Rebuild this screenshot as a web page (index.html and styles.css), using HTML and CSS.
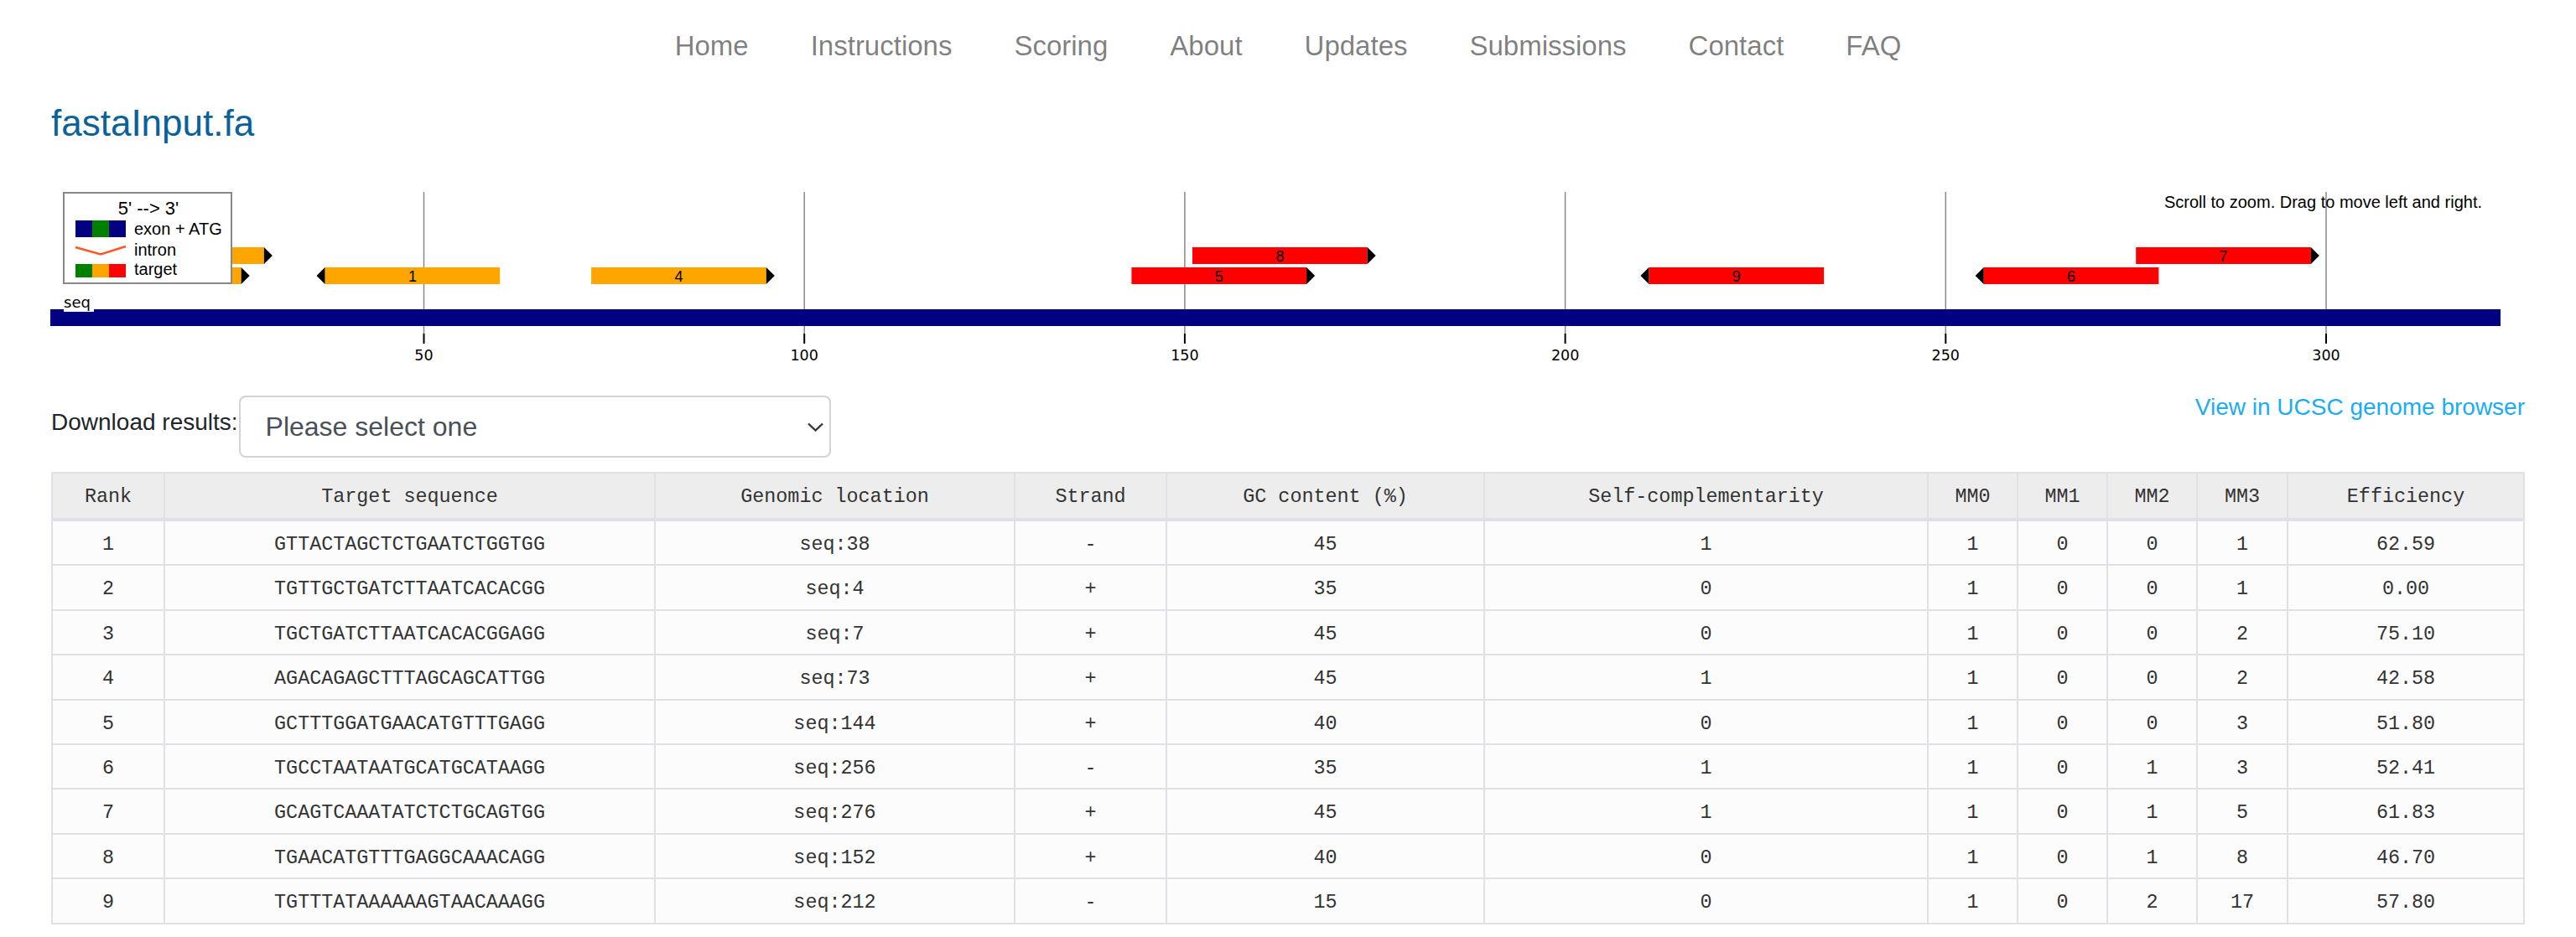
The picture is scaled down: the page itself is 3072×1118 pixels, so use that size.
FILE: index.html
```html
<!DOCTYPE html>
<html lang="en">
<head>
<meta charset="utf-8">
<title>fastaInput.fa</title>
<link rel="stylesheet" href="styles.css">
</head>
<body>
<nav class="topnav">
  <a href="#">Home</a>
  <a href="#">Instructions</a>
  <a href="#">Scoring</a>
  <a href="#">About</a>
  <a href="#">Updates</a>
  <a href="#">Submissions</a>
  <a href="#">Contact</a>
  <a href="#">FAQ</a>
</nav>
<main class="page">
  <h1 class="title">fastaInput.fa</h1>

  <svg class="diagram" width="2950" height="220" viewBox="0 0 2950 220">
    <g transform="translate(-61,-220)">
      <g class="grid">
        <line x1="505.5" y1="229" x2="505.5" y2="398"/>
        <line x1="959.2" y1="229" x2="959.2" y2="398"/>
        <line x1="1412.9" y1="229" x2="1412.9" y2="398"/>
        <line x1="1866.6" y1="229" x2="1866.6" y2="398"/>
        <line x1="2320.3" y1="229" x2="2320.3" y2="398"/>
        <line x1="2774" y1="229" x2="2774" y2="398"/>
      </g>
      <g class="ticks">
        <line x1="505.5" y1="398" x2="505.5" y2="410"/>
        <line x1="959.2" y1="398" x2="959.2" y2="410"/>
        <line x1="1412.9" y1="398" x2="1412.9" y2="410"/>
        <line x1="1866.6" y1="398" x2="1866.6" y2="410"/>
        <line x1="2320.3" y1="398" x2="2320.3" y2="410"/>
        <line x1="2774" y1="398" x2="2774" y2="410"/>
      </g>
      <g class="ticklabels">
        <text x="505.5" y="430">50</text>
        <text x="959.2" y="430">100</text>
        <text x="1412.9" y="430">150</text>
        <text x="1866.6" y="430">200</text>
        <text x="2320.3" y="430">250</text>
        <text x="2774" y="430">300</text>
      </g>

      <rect x="60" y="369" width="2922" height="20" fill="#000080"/>
      <rect x="76" y="356" width="36" height="16" fill="#fff"/>
      <text class="seqlabel" x="76" y="367">seq</text>

      <g class="targets">
        <!-- rank 2, seq:4 + (label hidden under legend) -->
        <rect x="79" y="319" width="208.7" height="20" fill="#ffa500"/>
        <polygon points="287.7,319 297.7,329 287.7,339"/>
        <!-- rank 3, seq:7 + (label hidden under legend) -->
        <rect x="106.2" y="295" width="208.7" height="20" fill="#ffa500"/>
        <polygon points="314.9,295 324.9,305 314.9,315"/>
        <!-- rank 1, seq:38 - -->
        <rect x="387.5" y="319" width="208.7" height="20" fill="#ffa500"/>
        <polygon points="387.5,319 377.5,329 387.5,339"/>
        <text x="491.9" y="335.5">1</text>
        <!-- rank 4, seq:73 + -->
        <rect x="705.1" y="319" width="208.7" height="20" fill="#ffa500"/>
        <polygon points="913.8,319 923.8,329 913.8,339"/>
        <text x="809.5" y="335.5">4</text>
        <!-- rank 5, seq:144 + -->
        <rect x="1349.4" y="319" width="208.7" height="20" fill="#ff0000"/>
        <polygon points="1558.1,319 1568.1,329 1558.1,339"/>
        <text x="1453.8" y="335.5">5</text>
        <!-- rank 8, seq:152 + -->
        <rect x="1422" y="295" width="208.7" height="20" fill="#ff0000"/>
        <polygon points="1630.7,295 1640.7,305 1630.7,315"/>
        <text x="1526.4" y="311.5">8</text>
        <!-- rank 9, seq:212 - -->
        <rect x="1966.4" y="319" width="208.7" height="20" fill="#ff0000"/>
        <polygon points="1966.4,319 1956.4,329 1966.4,339"/>
        <text x="2070.8" y="335.5">9</text>
        <!-- rank 6, seq:256 - -->
        <rect x="2365.7" y="319" width="208.7" height="20" fill="#ff0000"/>
        <polygon points="2365.7,319 2355.7,329 2365.7,339"/>
        <text x="2470.1" y="335.5">6</text>
        <!-- rank 7, seq:276 + -->
        <rect x="2547.2" y="295" width="208.7" height="20" fill="#ff0000"/>
        <polygon points="2755.9,295 2765.9,305 2755.9,315"/>
        <text x="2651.6" y="311.5">7</text>
      </g>

      <g class="legend">
        <rect x="76" y="230" width="200" height="108" fill="#fff" stroke="#888" stroke-width="2"/>
        <text class="lg-title" x="177" y="255.5">5' --&gt; 3'</text>
        <rect x="90" y="263" width="20" height="20" fill="#000080"/>
        <rect x="110" y="263" width="20" height="20" fill="#008000"/>
        <rect x="130" y="263" width="20" height="20" fill="#000080"/>
        <text x="160" y="280">exon + ATG</text>
        <polyline points="90,295 120,303.5 150,294" fill="none" stroke="#ff5722" stroke-width="2.5"/>
        <text x="160" y="305">intron</text>
        <rect x="90" y="315" width="20" height="16" fill="#008000"/>
        <rect x="110" y="315" width="20" height="16" fill="#ffa500"/>
        <rect x="130" y="315" width="20" height="16" fill="#ff0000"/>
        <text x="160" y="328">target</text>
      </g>

      <text class="hint" x="2960" y="248">Scroll to zoom. Drag to move left and right.</text>
    </g>
  </svg>

  <div class="tools">
    <label for="dl">Download results:</label>
    <div class="select-wrap">
      <select id="dl">
        <option>Please select one</option>
        <option>CSV</option>
        <option>Tab-delimited</option>
      </select>
      <svg class="chev" width="19" height="11" viewBox="0 0 19 11"><polyline points="1,1.5 9.5,9.5 18,1.5" fill="none" stroke="#343a40" stroke-width="2.4"/></svg>
    </div>
    <a class="ucsc" href="#">View in UCSC genome browser</a>
  </div>

  <table class="results">
    <colgroup>
      <col style="width:134px">
      <col style="width:585px">
      <col style="width:429px">
      <col style="width:181px">
      <col style="width:379px">
      <col style="width:529px">
      <col style="width:107px">
      <col style="width:107px">
      <col style="width:107px">
      <col style="width:108px">
      <col style="width:282px">
    </colgroup>
    <thead>
      <tr><th>Rank</th><th>Target sequence</th><th>Genomic location</th><th>Strand</th><th>GC content (%)</th><th>Self-complementarity</th><th>MM0</th><th>MM1</th><th>MM2</th><th>MM3</th><th>Efficiency</th></tr>
    </thead>
    <tbody>
      <tr><td>1</td><td>GTTACTAGCTCTGAATCTGGTGG</td><td>seq:38</td><td>-</td><td>45</td><td>1</td><td>1</td><td>0</td><td>0</td><td>1</td><td>62.59</td></tr>
      <tr><td>2</td><td>TGTTGCTGATCTTAATCACACGG</td><td>seq:4</td><td>+</td><td>35</td><td>0</td><td>1</td><td>0</td><td>0</td><td>1</td><td>0.00</td></tr>
      <tr><td>3</td><td>TGCTGATCTTAATCACACGGAGG</td><td>seq:7</td><td>+</td><td>45</td><td>0</td><td>1</td><td>0</td><td>0</td><td>2</td><td>75.10</td></tr>
      <tr><td>4</td><td>AGACAGAGCTTTAGCAGCATTGG</td><td>seq:73</td><td>+</td><td>45</td><td>1</td><td>1</td><td>0</td><td>0</td><td>2</td><td>42.58</td></tr>
      <tr><td>5</td><td>GCTTTGGATGAACATGTTTGAGG</td><td>seq:144</td><td>+</td><td>40</td><td>0</td><td>1</td><td>0</td><td>0</td><td>3</td><td>51.80</td></tr>
      <tr><td>6</td><td>TGCCTAATAATGCATGCATAAGG</td><td>seq:256</td><td>-</td><td>35</td><td>1</td><td>1</td><td>0</td><td>1</td><td>3</td><td>52.41</td></tr>
      <tr><td>7</td><td>GCAGTCAAATATCTCTGCAGTGG</td><td>seq:276</td><td>+</td><td>45</td><td>1</td><td>1</td><td>0</td><td>1</td><td>5</td><td>61.83</td></tr>
      <tr><td>8</td><td>TGAACATGTTTGAGGCAAACAGG</td><td>seq:152</td><td>+</td><td>40</td><td>0</td><td>1</td><td>0</td><td>1</td><td>8</td><td>46.70</td></tr>
      <tr><td>9</td><td>TGTTTATAAAAAAGTAACAAAGG</td><td>seq:212</td><td>-</td><td>15</td><td>0</td><td>1</td><td>0</td><td>2</td><td>17</td><td>57.80</td></tr>
    </tbody>
  </table>
</main>
</body>
</html>
```

FILE: styles.css
```css
* {
  box-sizing: border-box;
}

body {
  margin: 0;
  background: #fff;
  color: #212529;
  font-family: "Liberation Sans", Arial, sans-serif;
}

.topnav {
  display: flex;
  justify-content: center;
  padding-top: 30px;
}

.topnav a {
  padding: 0 37px;
  font-size: 33px;
  line-height: 50px;
  color: rgba(0, 0, 0, 0.5);
  text-decoration: none;
}

.page {
  padding: 0 61px;
}

.title {
  margin: 41px 0 0;
  font-size: 44px;
  line-height: 52px;
  font-weight: normal;
  color: #0b6199;
}

.diagram {
  display: block;
  margin-top: 47px;
  overflow: visible;
}

.diagram text {
  font-family: "Liberation Sans", Arial, sans-serif;
  font-size: 20px;
  fill: #000;
}

.grid line {
  stroke: #888;
  stroke-width: 1.5;
}

.ticks line {
  stroke: #000;
  stroke-width: 2;
}

.diagram .ticklabels text {
  font-family: "DejaVu Sans", Verdana, sans-serif;
  font-size: 17.5px;
  text-anchor: middle;
}

.diagram .seqlabel {
  font-family: "DejaVu Sans", Verdana, sans-serif;
  font-size: 18px;
}

.targets polygon {
  fill: #000;
}

.diagram .targets text {
  font-size: 18px;
  text-anchor: middle;
}

.diagram .lg-title {
  font-size: 22px;
  text-anchor: middle;
}

.diagram .hint {
  text-anchor: end;
}

.tools {
  display: flex;
  align-items: flex-start;
  height: 81px;
  margin-top: 25px;
}

.tools label {
  padding-top: 18px;
  margin-right: 1px;
  font-size: 28px;
  line-height: 42px;
}

.select-wrap {
  position: relative;
  width: 706px;
  margin-top: 7px;
}

.select-wrap select {
  width: 100%;
  height: 74px;
  padding: 0 60px 0 30px;
  border: 2px solid #ced4da;
  border-radius: 8px;
  background: #fff;
  color: #495057;
  font-family: "Liberation Sans", Arial, sans-serif;
  font-size: 32px;
  -webkit-appearance: none;
  appearance: none;
}

.chev {
  position: absolute;
  right: 9px;
  top: 32px;
}

.ucsc {
  margin-left: auto;
  font-size: 28px;
  line-height: 42px;
  color: #1aacf5;
  text-decoration: none;
}

.results {
  width: 2950px;
  margin-top: 17px;
  table-layout: fixed;
  border-collapse: separate;
  border-spacing: 0;
  border-top: 2px solid #dee2e6;
  border-left: 2px solid #dee2e6;
  font-family: "Liberation Mono", "Courier New", monospace;
  font-size: 23.4px;
  color: #333;
}

.results th,
.results td {
  padding: 0 4px;
  border-right: 2px solid #dee2e6;
  border-bottom: 2px solid #dee2e6;
  text-align: center;
  font-weight: normal;
  white-space: nowrap;
}

.results th {
  padding-top: 4px;
  background: #ededed;
  line-height: 49px;
  border-bottom-width: 4px;
}

.results td {
  padding-top: 5px;
  background: #fcfcfc;
  line-height: 46.4px;
}
```
